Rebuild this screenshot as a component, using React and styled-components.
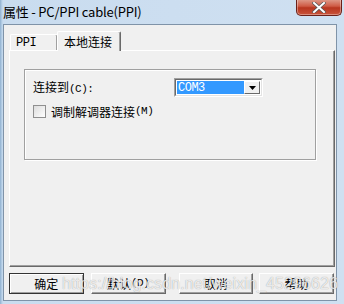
import styled, { createGlobalStyle } from "styled-components";

const Global = createGlobalStyle`
  html, body { margin: 0; padding: 0; }
  body {
    width: 344px;
    height: 304px;
    overflow: hidden;
    font-family: "Noto Sans CJK SC", "Liberation Sans", sans-serif;
  }
`;

const Window = styled.div`
  width: 344px;
  height: 304px;
  box-sizing: border-box;
  display: flex;
  flex-direction: column;
  padding: 0 7px 3px 3px;
  background: linear-gradient(90deg, #8fb0cf 0px, #b9d1e8 2px, #c9dcef 3px, #cfe0f1 100%);
`;

const TitleBar = styled.div`
  height: 24px;
  display: flex;
  align-items: center;
  position: relative;
  margin-right: -7px;
`;

const Title = styled.span`
  font-size: 13px;
  color: #000;
  line-height: 1;
  margin-top: -2px;
  letter-spacing: -0.2px;
`;

const Close = styled.div`
  position: absolute;
  top: -1px;
  right: 2px;
  width: 44px;
  height: 16px;
  border: 1px solid #6b2119;
  border-top: none;
  border-radius: 0 0 5px 5px;
  background: linear-gradient(#e0a08f, #cf5b45 45%, #b8361f 55%, #c9543b);
  box-shadow: inset 0 0 0 1px rgba(255, 255, 255, 0.35);
  display: flex;
  align-items: center;
  justify-content: center;
`;

const Body = styled.div`
  flex: 1;
  background: #f0f0f0;
  border: 1px solid #7f93a8;
  display: flex;
  flex-direction: column;
  padding: 6px 2px 0 5px;
  position: relative;
`;

const TabRow = styled.div`
  height: 19px;
  display: flex;
  align-items: flex-end;
  padding-left: 1px;
  position: relative;
  z-index: 1;
`;

const Tab = styled.div`
  box-sizing: border-box;
  height: ${(p) => (p.$active ? "20px" : "16px")};
  margin-bottom: ${(p) => (p.$active ? "-1px" : "0")};
  width: ${(p) => p.$w}px;
  margin-left: ${(p) => (p.$active ? "-1px" : "0")};
  background: #f0f0f0;
  border-top: 1px solid #fff;
  border-left: 1px solid #fff;
  border-right: 1px solid #696969;
  box-shadow: inset -1px 0 #a0a0a0;
  border-radius: 2px 2px 0 0;
  display: flex;
  align-items: center;
  padding-left: ${(p) => p.$pad}px;
  font-size: 12px;
  line-height: 1;
`;

const Mono = styled.span`
  font-family: "Liberation Mono", monospace;
  font-size: ${(p) => p.$size || 11}px;
  letter-spacing: -0.5px;
`;

const Panel = styled.div`
  box-sizing: border-box;
  width: 326px;
  height: 217px;
  border-top: 1px solid #fff;
  border-left: 1px solid #fff;
  border-right: 1px solid #696969;
  border-bottom: 1px solid #696969;
  box-shadow: inset -1px -1px #a0a0a0;
  padding: 18px 0 0 14px;
`;

const Group = styled.div`
  box-sizing: border-box;
  width: 292px;
  height: 91px;
  border: 1px solid #a0a0a0;
  box-shadow: inset 1px 1px #fff, 1px 1px #fff;
  padding: 8px 0 0 8px;
  display: flex;
  flex-direction: column;
  gap: 8px;
`;

const Row = styled.div`
  display: flex;
  align-items: center;
  font-size: 12px;
  line-height: 1;
  color: #000;
`;

const Label = styled.span`
  width: 141px;
`;

const Combo = styled.div`
  box-sizing: border-box;
  width: 89px;
  height: 19px;
  border-top: 1px solid #a0a0a0;
  border-left: 1px solid #a0a0a0;
  border-right: 1px solid #fff;
  border-bottom: 1px solid #fff;
  display: flex;
`;

const ComboInner = styled.div`
  flex: 1;
  display: flex;
  border-top: 1px solid #696969;
  border-left: 1px solid #696969;
  border-right: 1px solid #e3e3e3;
  border-bottom: 1px solid #e3e3e3;
  background: #fff;
  padding: 1px;
`;

const Selected = styled.div`
  flex: 1;
  background: #3399ff;
  color: #fff;
  display: flex;
  align-items: center;
  padding-left: 1px;
`;

const DropBtn = styled.div`
  box-sizing: border-box;
  width: 16px;
  background: #f0f0f0;
  border-top: 1px solid #fff;
  border-left: 1px solid #fff;
  border-right: 1px solid #696969;
  border-bottom: 1px solid #696969;
  display: flex;
  align-items: center;
  justify-content: center;
`;

const Check = styled.div`
  box-sizing: border-box;
  width: 13px;
  height: 13px;
  border: 1px solid #8f8f8f;
  background: linear-gradient(135deg, #dcdcdc, #fff);
  margin-right: 5px;
`;

const ButtonRow = styled.div`
  display: flex;
  margin-top: 6px;
`;

const Button = styled.div`
  box-sizing: border-box;
  width: 75px;
  height: 21px;
  margin-left: ${(p) => p.$ml || 0}px;
  background: #f0f0f0;
  border: 1px solid;
  border-color: ${(p) => (p.$default ? "#333" : "#fff #696969 #696969 #fff")};
  box-shadow: ${(p) =>
    p.$default ? "inset 1px 1px #fff, inset -1px -1px #a0a0a0" : "inset -1px -1px #a0a0a0"};
  display: flex;
  align-items: center;
  justify-content: center;
  font-size: 12px;
  line-height: 1;
  color: #000;
`;

const Watermark = styled.div`
  position: absolute;
  left: 58px;
  top: 250px;
  font-family: "Liberation Sans", sans-serif;
  font-size: 16px;
  color: rgba(255, 255, 255, 0.8);
  text-shadow: 0 0 1px rgba(0, 0, 0, 0.4);
  letter-spacing: 0.1px;
  pointer-events: none;
`;

export default function App() {
  return (
    <>
      <Global />
      <Window>
        <TitleBar>
          <Title>属性 - PC/PPI cable(PPI)</Title>
          <Close>
            <svg width="14" height="11" viewBox="0 0 14 11">
              <path
                d="M2 1 L12 10 M12 1 L2 10"
                stroke="#555"
                strokeWidth="3.4"
                strokeLinecap="square"
              />
              <path
                d="M2 1 L12 10 M12 1 L2 10"
                stroke="#fff"
                strokeWidth="2"
                strokeLinecap="square"
              />
            </svg>
          </Close>
        </TitleBar>
        <Body>
          <TabRow>
            <Tab $w={48} $pad={5}>
              <Mono $size={12}>PPI</Mono>
            </Tab>
            <Tab $active $w={64} $pad={6}>
              本地连接
            </Tab>
          </TabRow>
          <Panel>
            <Group>
              <Row>
                <Label>
                  连接到<Mono>(C):</Mono>
                </Label>
                <Combo>
                  <ComboInner>
                    <Selected>
                      <Mono $size={12}>COM3</Mono>
                    </Selected>
                    <DropBtn>
                      <svg width="7" height="4" viewBox="0 0 7 4">
                        <path d="M0 0 H7 L3.5 4 Z" fill="#000" />
                      </svg>
                    </DropBtn>
                  </ComboInner>
                </Combo>
              </Row>
              <Row>
                <Check />
                调制解调器连接<Mono>(M)</Mono>
              </Row>
            </Group>
          </Panel>
          <ButtonRow>
            <Button $default>确定</Button>
            <Button $ml={7}>
              默认<Mono>(D)</Mono>
            </Button>
            <Button $ml={13}>取消</Button>
            <Button $ml={6}>帮助</Button>
          </ButtonRow>
          <Watermark>https://blog.csdn.net/weixin_45296626</Watermark>
        </Body>
      </Window>
    </>
  );
}
